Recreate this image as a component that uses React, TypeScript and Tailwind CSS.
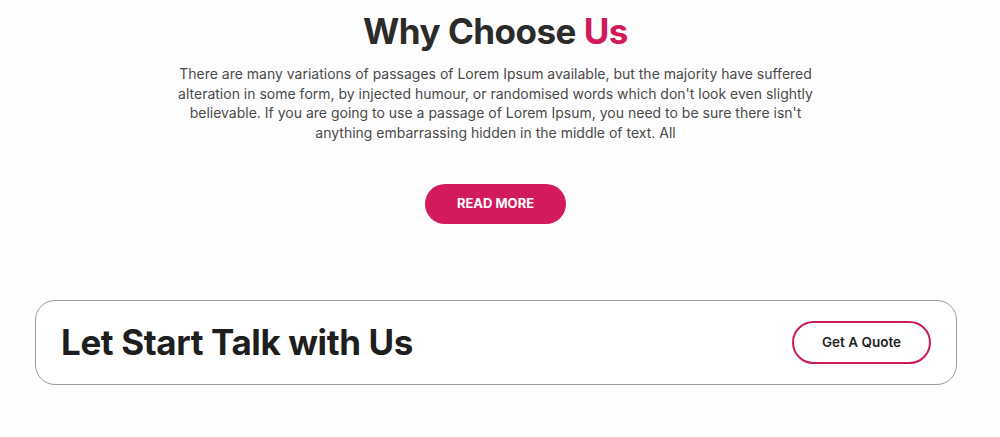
export default function App() {
  return (
    <div className="min-h-[437px] w-full bg-[#fefdfe] font-['Inter','Open_Sans',sans-serif]">
      <div className="w-[991px]">
        <section className="flex flex-col items-center pt-[9px]">
          <h2 className="text-[35px] font-bold leading-[44px] tracking-[-0.5px] text-[#2b2b2b]">
            Why Choose <span className="text-[#d21a5b]">Us</span>
          </h2>
          <p className="mt-[11px] w-[660px] text-center text-[14px] leading-[19.5px] text-[#4a4a4a]">
            There are many variations of passages of Lorem Ipsum available, but the majority have suffered
            alteration in some form, by injected humour, or randomised words which don't look even slightly
            believable. If you are going to use a passage of Lorem Ipsum, you need to be sure there isn't
            anything embarrassing hidden in the middle of text. All
          </p>
          <button className="mt-[42px] h-[40px] w-[141px] rounded-full bg-[#d31a5c] text-[13px] font-bold text-white">
            READ MORE
          </button>
        </section>
        <section className="px-[35px] pt-[76px]">
          <div className="flex h-[85px] w-[922px] items-center justify-between rounded-[20px] border border-[#9a9a9a] bg-white pl-[25px] pr-[25px]">
            <h3 className="text-[35px] font-bold tracking-[-0.4px] text-[#1e1e1e]">Let Start Talk with Us</h3>
            <button className="h-[43px] w-[139px] rounded-full border-2 border-[#c81d5a] text-[13.5px] font-semibold text-[#222]">
              Get A Quote
            </button>
          </div>
        </section>
      </div>
    </div>
  );
}
